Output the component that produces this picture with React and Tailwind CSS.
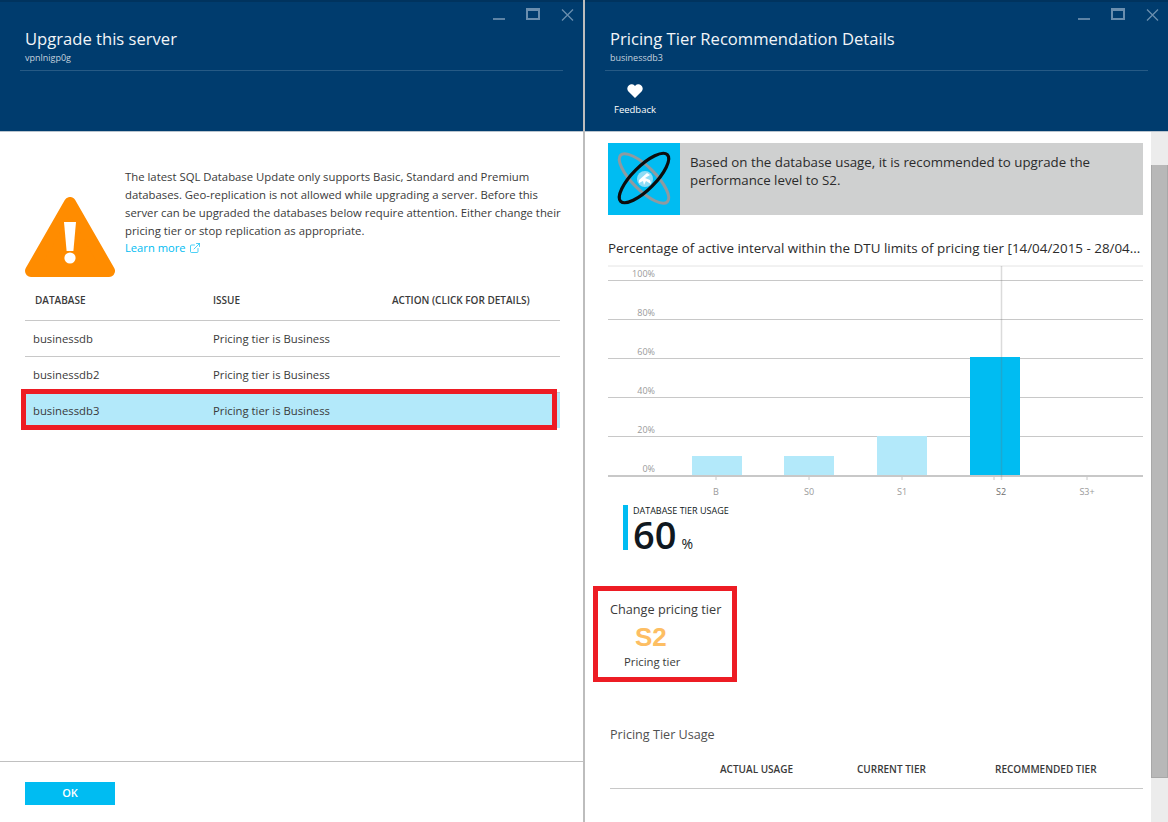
import { ExternalLink } from 'lucide-react'

const FONT = "font-['Open_Sans','Noto_Sans',sans-serif]"

const rows = ['businessdb', 'businessdb2', 'businessdb3']
const gridRows = ['100%', '80%', '60%', '40%', '20%', '0%']
const bars = [
  { label: 'B', x: 84, h: 19, tick: 108, text: 108, fill: '#b3e9fa' },
  { label: 'S0', x: 176, h: 19, tick: 201, text: 201, fill: '#b3e9fa' },
  { label: 'S1', x: 269, h: 39, tick: 294, text: 294, fill: '#b3e9fa' },
  { label: 'S2', x: 362, h: 118, tick: 386, text: 393, fill: '#00bcf2' },
  { label: 'S3+', x: 0, h: 0, tick: 479, text: 479, fill: 'none' },
]

function WindowButtons() {
  return (
    <div className="box-content flex h-[14px] items-start justify-end gap-[21px] pr-[9px] pt-[6px]">
      <span className="mt-[10px] h-[2px] w-[12px] bg-[#5d83a5]" />
      <span className="h-[12px] w-[14px] border-2 border-t-[3px] border-[#6a8eae]" />
      <svg width="13" height="12" viewBox="0 0 13 12" className="mt-[1px] block">
        <path d="M1 .5l11 11M12 .5l-11 11" stroke="#6a8eae" strokeWidth="1.3" fill="none" />
      </svg>
    </div>
  )
}

function BladeHeader({ title, subtitle, children }) {
  return (
    <header className="h-[132px] shrink-0 border-t-2 border-b border-t-[#00335e] border-b-[#b9c4ce] bg-[#003c6e] text-white">
      <WindowButtons />
      <div className="mx-[20px] h-[49px] border-b border-[#265a85] pl-[5px]">
        <h1 className="whitespace-nowrap pt-[5px] text-[16.6px] leading-[24px] text-[#f2f5f8]">{title}</h1>
        <p className="pt-[1px] text-[9px] leading-[12px] text-[#c5d2de]">{subtitle}</p>
      </div>
      {children}
    </header>
  )
}

function WarningIcon() {
  return (
    <svg width="90" height="80" viewBox="0 0 90 80" className="block shrink-0">
      <path d="M45 6L84 74H6Z" fill="#ff8c00" stroke="#ff8c00" strokeWidth="12" strokeLinejoin="round" />
      <path d="M39 25h12l-2.6 29h-6.8Z" fill="#fff" />
      <circle cx="45" cy="61" r="5.6" fill="#fff" />
    </svg>
  )
}

function LeftBlade() {
  return (
    <section className="flex h-full w-[585px] shrink-0 flex-col border-r-2 border-[#bdbdbd]">
      <BladeHeader title="Upgrade this server" subtitle="vpnlnigp0g" />
      <div className="relative flex-1 px-[25px]">
        <div className="flex gap-[10px] pt-[36px]">
          <div className="pt-[29px]">
            <WarningIcon />
          </div>
          <div className="whitespace-nowrap text-[11.33px] leading-[18px] text-[#3a3a3a]">
            The latest SQL Database Update only supports Basic, Standard and Premium
            <br />
            databases. Geo-replication is not allowed while upgrading a server. Before this
            <br />
            server can be upgraded the databases below require attention. Either change their
            <br />
            pricing tier or stop replication as appropriate.
            <div className="flex h-[16px] items-center gap-[3px] text-[11.2px] leading-[16px] text-[#00bcf2]">
              Learn more <ExternalLink size={12} strokeWidth={1.4} />
            </div>
          </div>
        </div>

        <table className="w-[535px] table-fixed text-left text-[#3a3a3a]">
          <thead>
            <tr className="h-[43px] text-[10px] uppercase">
              <th className="w-[178px] pl-[10px] pt-[4px] font-semibold">Database</th>
              <th className="w-[179px] pl-[10px] pt-[4px] font-semibold">Issue</th>
              <th className="pl-[10px] pt-[4px] font-semibold">Action (click for details)</th>
            </tr>
          </thead>
          <tbody className="text-[11.3px]">
            {rows.map((name, i) => (
              <tr key={name} className={`h-[36px] border-t border-[#c8c8c8] ${i === 2 ? 'bg-[#b3e9fa]' : ''}`}>
                <td className="pl-[8px] pt-[2px]">{name}</td>
                <td className="pl-[10px] pt-[2px]">Pricing tier is Business</td>
                <td />
              </tr>
            ))}
          </tbody>
        </table>

        {/* red annotation round the selected row */}
        <div className="pointer-events-none absolute left-[21px] top-[257px] h-[41px] w-[536px] border-[5px] border-[#ed1c24]" />
      </div>
      <footer className="h-[61px] shrink-0 border-t border-[#c0c0c0] px-[25px] pt-[20px]">
        <button className="block h-[23px] w-[90px] bg-[#00bcf2] text-[11px] font-semibold text-white">OK</button>
      </footer>
    </section>
  )
}

function TierLogo() {
  return (
    <svg width="72" height="72" viewBox="0 0 72 72" className="block shrink-0 bg-[#00bcf2]">
      <ellipse cx="36" cy="35.5" rx="33" ry="11.5" transform="rotate(45 36 35.5)" fill="none" stroke="#8f9aa0" strokeWidth="3" />
      <circle cx="37" cy="36" r="8" fill="#8fdcf5" />
      <path d="M31 37l8-7 3 2-5 3 5 2 1 4-5-3-2 4-1-4-4 2Z" fill="#fff" />
      <ellipse cx="36" cy="35" rx="33" ry="11.5" transform="rotate(-45 36 35)" fill="none" stroke="#0c0c0c" strokeWidth="3.2" />
    </svg>
  )
}

function UsageChart() {
  return (
    <svg width="535" height="240" viewBox="0 0 535 240" className="mt-[8px] block font-['Open_Sans',sans-serif]">
      <line x1="0" x2="535" y1="1" y2="1" stroke="#e4e4e4" />
      {gridRows.map((label, i) => {
        const y = 15.5 + i * 39
        return (
          <g key={label}>
            <line x1="0" x2="535" y1={i === 5 ? y + 0.5 : y} y2={i === 5 ? y + 0.5 : y} stroke="#c8c8c8" strokeWidth={i === 5 ? 2 : 1} />
            <text x="47" y={y - 4} textAnchor="end" fontSize="9" fill="#9a9a9a">{label}</text>
          </g>
        )
      })}
      {bars.map((b) => (
        <g key={b.label}>
          {b.h > 0 && <rect x={b.x} y={210 - b.h} width="50" height={b.h} fill={b.fill} />}
          <line x1={b.tick} x2={b.tick} y1="211" y2="215" stroke="#c8c8c8" />
          <text x={b.text} y="230" textAnchor="middle" fontSize="9" fill={b.label === 'S2' ? '#6e6e6e' : '#9a9a9a'}>{b.label}</text>
        </g>
      ))}
      <line x1="393.5" x2="393.5" y1="1" y2="215" stroke="#6e6e6e" strokeOpacity="0.25" strokeWidth="1.5" />
    </svg>
  )
}

function RightBlade() {
  return (
    <section className="flex h-full min-w-0 flex-1 flex-col">
      <BladeHeader title="Pricing Tier Recommendation Details" subtitle="businessdb3">
        <div className="ml-[28px] mt-[4px] flex w-[44px] flex-col items-center">
          <svg width="16" height="14" viewBox="0 0 16 14" className="mt-[9px] block">
            <path d="M8 14L1.2 7.2A4 4 0 0 1 8 2a4 4 0 0 1 6.8 5.2Z" fill="#fff" />
          </svg>
          <span className="mt-[6px] text-[9.5px] leading-[12px] text-white">Feedback</span>
        </div>
      </BladeHeader>
      <div className="flex min-h-0 flex-1">
        <div className="relative min-w-0 flex-1 overflow-hidden pl-[23px] pr-[8px]">
          <div className="mt-[11px] flex h-[72px] w-[535px] bg-[#cfd0d0]">
            <TierLogo />
            <p className="whitespace-nowrap pl-[10px] pt-[10px] text-[13.3px] leading-[18px] text-[#2b2b2b]">
              Based on the database usage, it is recommended to upgrade the
              <br />
              performance level to S2.
            </p>
          </div>

          <p className="mt-[25px] whitespace-nowrap text-[13.4px] leading-[17px] text-[#2b2b2b]">
            Percentage of active interval within the DTU limits of pricing tier [14/04/2015 - 28/04...
          </p>
          <UsageChart />

          <div className="ml-[15px] flex h-[45px] border-l-[5px] border-[#00bcf2] pl-[5px] text-[#101820]">
            <div>
              <p className="text-[9px] leading-[11px]">DATABASE TIER USAGE</p>
              <p className="mt-[2px] text-[38px] font-semibold leading-[32px]">
                60<span className="ml-[5px] text-[14px] font-normal">%</span>
              </p>
            </div>
          </div>

          <div className="ml-[2px] mt-[50px] text-[#3a3a3a]">
            <p className="text-[12.7px] leading-[18px]">Change pricing tier</p>
            <p className="ml-[25px] mt-[4px] font-['Liberation_Sans',sans-serif] text-[26px] font-bold leading-[30px] text-[#fdbe63]">S2</p>
            <p className="ml-[14px] mt-[2px] text-[11.3px] leading-[16px]">Pricing tier</p>
          </div>

          <p className="ml-[2px] mt-[56px] text-[12.6px] leading-[18px] text-[#505050]">Pricing Tier Usage</p>
          <div className="ml-[2px] mt-[17px] flex h-[28px] w-[533px] border-b border-[#c8c8c8] pt-[1px] text-[10px] font-semibold uppercase leading-[14px] text-[#3a3a3a]">
            <span className="ml-[110px] w-[137px]">Actual usage</span>
            <span className="w-[138px]">Current tier</span>
            <span>Recommended tier</span>
          </div>

          {/* red annotation round the tier picker */}
          <div className="pointer-events-none absolute left-[8px] top-[454px] h-[96px] w-[144px] border-[5px] border-[#ed1c24]" />
        </div>
        <div className="flex w-[17px] shrink-0 flex-col bg-[#ececec] pt-[33px]">
          <div className="h-[613px] border-x border-b border-[#a8a8a8] bg-[#b8b8b8]" />
        </div>
      </div>
    </section>
  )
}

export default function App() {
  return (
    <div className={`flex h-[822px] w-[1168px] overflow-hidden bg-white ${FONT}`}>
      <LeftBlade />
      <RightBlade />
    </div>
  )
}
